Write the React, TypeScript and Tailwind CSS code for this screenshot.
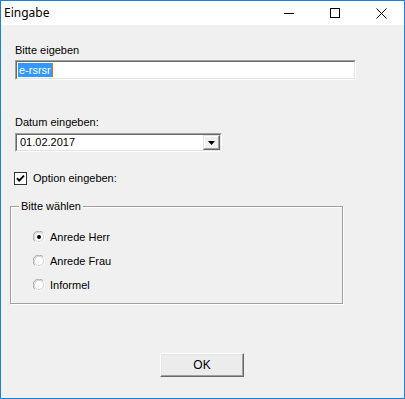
import React from 'react';

const ui = { fontFamily: '"Liberation Sans", Arial, sans-serif' };
const title = { fontFamily: '"Noto Sans", "Open Sans", sans-serif' };

const Sunken: React.FC<{ className?: string; children?: React.ReactNode }> = ({ className = '', children }) => (
  <div className={`border border-t-[#a0a0a0] border-l-[#a0a0a0] border-b-white border-r-white ${className}`}>
    <div className="h-full border border-t-[#696969] border-l-[#696969] border-b-[#e3e3e3] border-r-[#e3e3e3] bg-white flex items-center">
      {children}
    </div>
  </div>
);

const Radio: React.FC<{ checked?: boolean; label: string }> = ({ checked, label }) => (
  <div className="flex items-center h-[12px] gap-[5px]">
    <svg width="12" height="12" viewBox="0 0 12 12">
      <path d="M10.2 1.8 A5.9 5.9 0 0 0 1.8 10.2" fill="none" stroke="#a0a0a0" strokeWidth="1" />
      <path d="M1.8 10.2 A5.9 5.9 0 0 0 10.2 1.8" fill="none" stroke="#ffffff" strokeWidth="1" />
      <circle cx="6" cy="6" r="4.6" fill="#fff" stroke="#c8c8c8" strokeWidth="0.8" />
      {checked && <circle cx="6" cy="6" r="2" fill="#000" />}
    </svg>
    <span className="text-black">{label}</span>
  </div>
);

export default function App() {
  return (
    <div className="w-[405px] h-[399px] border border-[#1883d7] bg-[#f0f0f0] flex flex-col" style={ui}>
      <div className="h-[24px] bg-white flex items-center shrink-0">
        <span className="pl-[3px] text-[12px] text-black" style={title}>Eingabe</span>
        <div className="ml-auto flex h-full">
          <div className="w-[46px] h-full flex items-center justify-center">
            <svg width="10" height="10" viewBox="0 0 10 10"><path d="M0 5.5 H10" stroke="#000" strokeWidth="1" /></svg>
          </div>
          <div className="w-[46px] h-full flex items-center justify-center">
            <svg width="10" height="10" viewBox="0 0 10 10"><rect x="0.5" y="0.5" width="9" height="9" fill="none" stroke="#000" strokeWidth="1" /></svg>
          </div>
          <div className="w-[46px] h-full flex items-center justify-center">
            <svg width="11" height="11" viewBox="0 0 11 11"><path d="M0.5 0.5 L10.5 10.5 M10.5 0.5 L0.5 10.5" stroke="#000" strokeWidth="1" /></svg>
          </div>
        </div>
      </div>

      <div className="flex flex-col pl-[14px] pt-[19px] text-[11px] leading-[13px] text-black">
        <div className="h-[13px]">Bitte eigeben</div>
        <Sunken className="mt-[3px] w-[341px] h-[20px]">
          <span className="ml-[1px] flex items-center">
            <span className="bg-[#3399ff] text-white px-[1px] leading-[14px]">e-rsrsr</span>
            <span className="w-[1px] h-[14px] bg-[#e07020]" />
          </span>
        </Sunken>

        <div className="mt-[36px] h-[13px]">Datum eingeben:</div>
        <Sunken className="mt-[4px] w-[207px] h-[19px]">
          <span className="ml-[3px] flex-1">01.02.2017</span>
          <div className="w-[17px] h-full border border-t-[#e3e3e3] border-l-[#e3e3e3] border-b-[#696969] border-r-[#696969] bg-[#f0f0f0] flex items-center justify-center shadow-[inset_-1px_-1px_0_#a0a0a0,inset_1px_1px_0_#fff]">
            <svg width="7" height="4" viewBox="0 0 7 4"><path d="M0 0 H7 L3.5 4 Z" fill="#000" /></svg>
          </div>
        </Sunken>

        <div className="mt-[20px] -ml-[1px] flex items-center h-[13px] gap-[6px]">
          <svg width="13" height="13" viewBox="0 0 13 13">
            <rect x="0.5" y="0.5" width="12" height="12" fill="#fff" stroke="#333" strokeWidth="1" />
            <path d="M3 6.2 L5.2 8.6 L10 3.6" fill="none" stroke="#000" strokeWidth="1.8" />
          </svg>
          <span>Option eingeben:</span>
        </div>

        <div className="relative mt-[21px] -ml-[5px] w-[333px] h-[98px] border border-[#a0a0a0] shadow-[inset_1px_1px_0_#fff,1px_1px_0_#fff]">
          <span className="absolute -top-[7px] left-[8px] px-[2px] bg-[#f0f0f0] leading-[13px]">Bitte wählen</span>
          <div className="flex flex-col pt-[24px] pl-[22px] gap-[12px]">
            <Radio checked label="Anrede Herr" />
            <Radio label="Anrede Frau" />
            <Radio label="Informel" />
          </div>
        </div>

        <div className="mt-[49px] ml-[145px] w-[84px] h-[24px] border border-t-[#fff] border-l-[#fff] border-b-[#696969] border-r-[#696969] bg-[#ececec] shadow-[inset_-1px_-1px_0_#a0a0a0,inset_1px_1px_0_#e3e3e3] flex items-center justify-center text-[12px]">
          OK
        </div>
      </div>
    </div>
  );
}
